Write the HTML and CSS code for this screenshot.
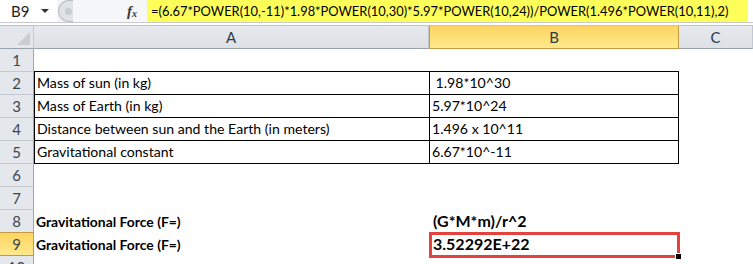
FILE: index.html
```html
<!DOCTYPE html>
<html lang="en">
<head>
    <meta charset="UTF-8">
    <title>Gravitational Force</title>
    <link rel="stylesheet" href="styles.css">
</head>
<body>
    <!-- formula bar -->
    <div class="formula-bar">
        <div class="name-box">
            <span class="name">B9</span>
            <span class="drop"></span>
        </div>
        <div class="splitter"><span class="knob"></span></div>
        <div class="fx-area"><span class="fx">f<sub>x</sub></span></div>
        <div class="formula">=(6.67*POWER(10,-11)*1.98*POWER(10,30)*5.97*POWER(10,24))/POWER(1.496*POWER(10,11),2)</div>
        <div class="bar-end"></div>
    </div>
    <div class="bar-gap"></div>

    <!-- sheet -->
    <div class="sheet">
        <div class="corner"><span class="tri"></span></div>
        <div class="ch">A</div>
        <div class="ch sel">B</div>
        <div class="ch">C</div>

        <div class="rh">1</div>
        <div class="cell"></div>
        <div class="cell"></div>
        <div class="cell"></div>

        <div class="rh">2</div>
        <div class="cell tb top la">Mass of sun (in kg)</div>
        <div class="cell tb top lb">&nbsp;1.98*10^30</div>
        <div class="cell"></div>

        <div class="rh">3</div>
        <div class="cell tb la">Mass of Earth (in kg)</div>
        <div class="cell tb lb">5.97*10^24</div>
        <div class="cell"></div>

        <div class="rh">4</div>
        <div class="cell tb la">Distance between sun and the Earth (in meters)</div>
        <div class="cell tb lb">1.496 x 10^11</div>
        <div class="cell"></div>

        <div class="rh">5</div>
        <div class="cell tb la">Gravitational constant</div>
        <div class="cell tb lb">6.67*10^-11</div>
        <div class="cell"></div>

        <div class="rh">6</div>
        <div class="cell"></div>
        <div class="cell"></div>
        <div class="cell"></div>

        <div class="rh">7</div>
        <div class="cell"></div>
        <div class="cell"></div>
        <div class="cell"></div>

        <div class="rh">8</div>
        <div class="cell bold">Gravitational Force (F=)</div>
        <div class="cell big">(G*M*m)/r^2</div>
        <div class="cell"></div>

        <div class="rh sel">9</div>
        <div class="cell bold">Gravitational Force (F=)</div>
        <div class="cell big active">3.52292E+22<span class="handle"></span></div>
        <div class="cell"></div>

        <div class="rh">10</div>
        <div class="cell"></div>
        <div class="cell"></div>
        <div class="cell"></div>
    </div>
</body>
</html>
```

FILE: styles.css
```css
body{
    margin: 0;
    background: #ffffff;
    font-family: Lato, "Liberation Sans", sans-serif;
    overflow: hidden;
}
/* formula bar */
.formula-bar{
    display: flex;
    height: 22px;
    background: #f3f4f6;
}
.name-box{
    width: 57px;
    background: #ffffff;
    display: flex;
    align-items: center;
    justify-content: space-between;
    padding: 0 8px 0 11px;
    box-sizing: border-box;
}
.name{
    font-size: 15px;
    color: #1e1e1e;
}
.drop{
    width: 0;
    height: 0;
    border-left: 4px solid transparent;
    border-right: 4px solid transparent;
    border-top: 4px solid #333333;
}
.splitter{
    width: 15px;
    display: flex;
    align-items: center;
    background: #dfe2e6;
    border-radius: 11px 0 0 11px;
    border: 1px solid #b9bec5;
    border-right: none;
    box-sizing: border-box;
    margin-left: 1px;
}
.knob{
    width: 7px;
    height: 7px;
    margin-left: 6px;
    border-radius: 50%;
    background: #c9cdd2;
}
.fx-area{
    width: 74px;
    display: flex;
    align-items: center;
    justify-content: flex-end;
    padding-right: 10px;
    box-sizing: border-box;
    background: #f6f7f8;
}
.fx{
    font-family: "Liberation Serif", serif;
    font-style: italic;
    font-weight: bold;
    font-size: 15px;
    color: #3a3a3a;
}
.fx sub{
    font-size: 10px;
    vertical-align: -1px;
}
.formula{
    width: 601px;
    background: #ffff5a;
    font-size: 12.9px;
    line-height: 22px;
    padding-left: 4px;
    box-sizing: border-box;
    color: #000000;
    white-space: nowrap;
    overflow: hidden;
}
.bar-end{
    flex: 1;
    background: #ffffff;
}
.bar-gap{
    height: 4px;
    border-top: 1px solid #c6cad0;
    border-bottom: 1px solid #bfc4ca;
    box-sizing: border-box;
    background: #ffffff;
}
/* grid */
.sheet{
    display: grid;
    grid-template-columns: 34px 395px 250px 1fr;
    grid-auto-rows: 23px;
}
.corner{
    background: #e3e6ea;
    border-right: 1px solid #c3c8ce;
    border-bottom: 1px solid #9aa2ac;
    position: relative;
}
.tri{
    position: absolute;
    right: 3px;
    bottom: 3px;
    width: 0;
    height: 0;
    border-left: 13px solid transparent;
    border-bottom: 13px solid #c9ced4;
}
.ch{
    background: linear-gradient(#e6e9ed, #dde1e6);
    border-right: 1px solid #c3c8ce;
    border-bottom: 1px solid #9aa2ac;
    display: flex;
    align-items: center;
    justify-content: center;
    font-size: 15px;
    color: #2d3a4a;
}
.ch.sel{
    background: linear-gradient(#fdd462, #ffe98c);
    border-left: 1px solid #c29a45;
    border-right: 1px solid #c29a45;
    border-bottom: 1px solid #c29a45;
}
.rh{
    background: #e4e7eb;
    border-right: 1px solid #9fa7b1;
    border-bottom: 1px solid #c3c8ce;
    display: flex;
    align-items: center;
    justify-content: center;
    font-size: 15px;
    color: #3b4654;
}
.rh.sel{
    background: linear-gradient(#fdd462, #ffe98c);
    border-right: 1px solid #c29a45;
    border-bottom: 1px solid #c29a45;
    border-top: 1px solid #c29a45;
    margin-top: -1px;
}
.cell{
    display: flex;
    align-items: flex-end;
    padding: 0 0 3px 2px;
    box-sizing: border-box;
    font-size: 14.1px;
    color: #000000;
    white-space: nowrap;
}
.tb{
    border-bottom: 1px solid #000000;
}
.top{
    border-top: 1px solid #000000;
    margin-top: -1px;
}
.la{
    border-left: 1px solid #000000;
}
.lb{
    border-left: 1px solid #000000;
    border-right: 1px solid #000000;
}
.bold{
    font-weight: bold;
    font-size: 13.9px;
}
.big{
    font-weight: bold;
    font-size: 16px;
    padding-left: 4px;
}
.active{
    position: relative;
}
/* red box around the result */
.active::before{
    content: "";
    position: absolute;
    left: 0;
    right: -1px;
    top: -1px;
    bottom: -2px;
    border: 3px solid #e4423d;
}
.handle{
    position: absolute;
    right: -3px;
    bottom: -4px;
    width: 5px;
    height: 5px;
    background: #000000;
    border: 1px solid #ffffff;
}
```
